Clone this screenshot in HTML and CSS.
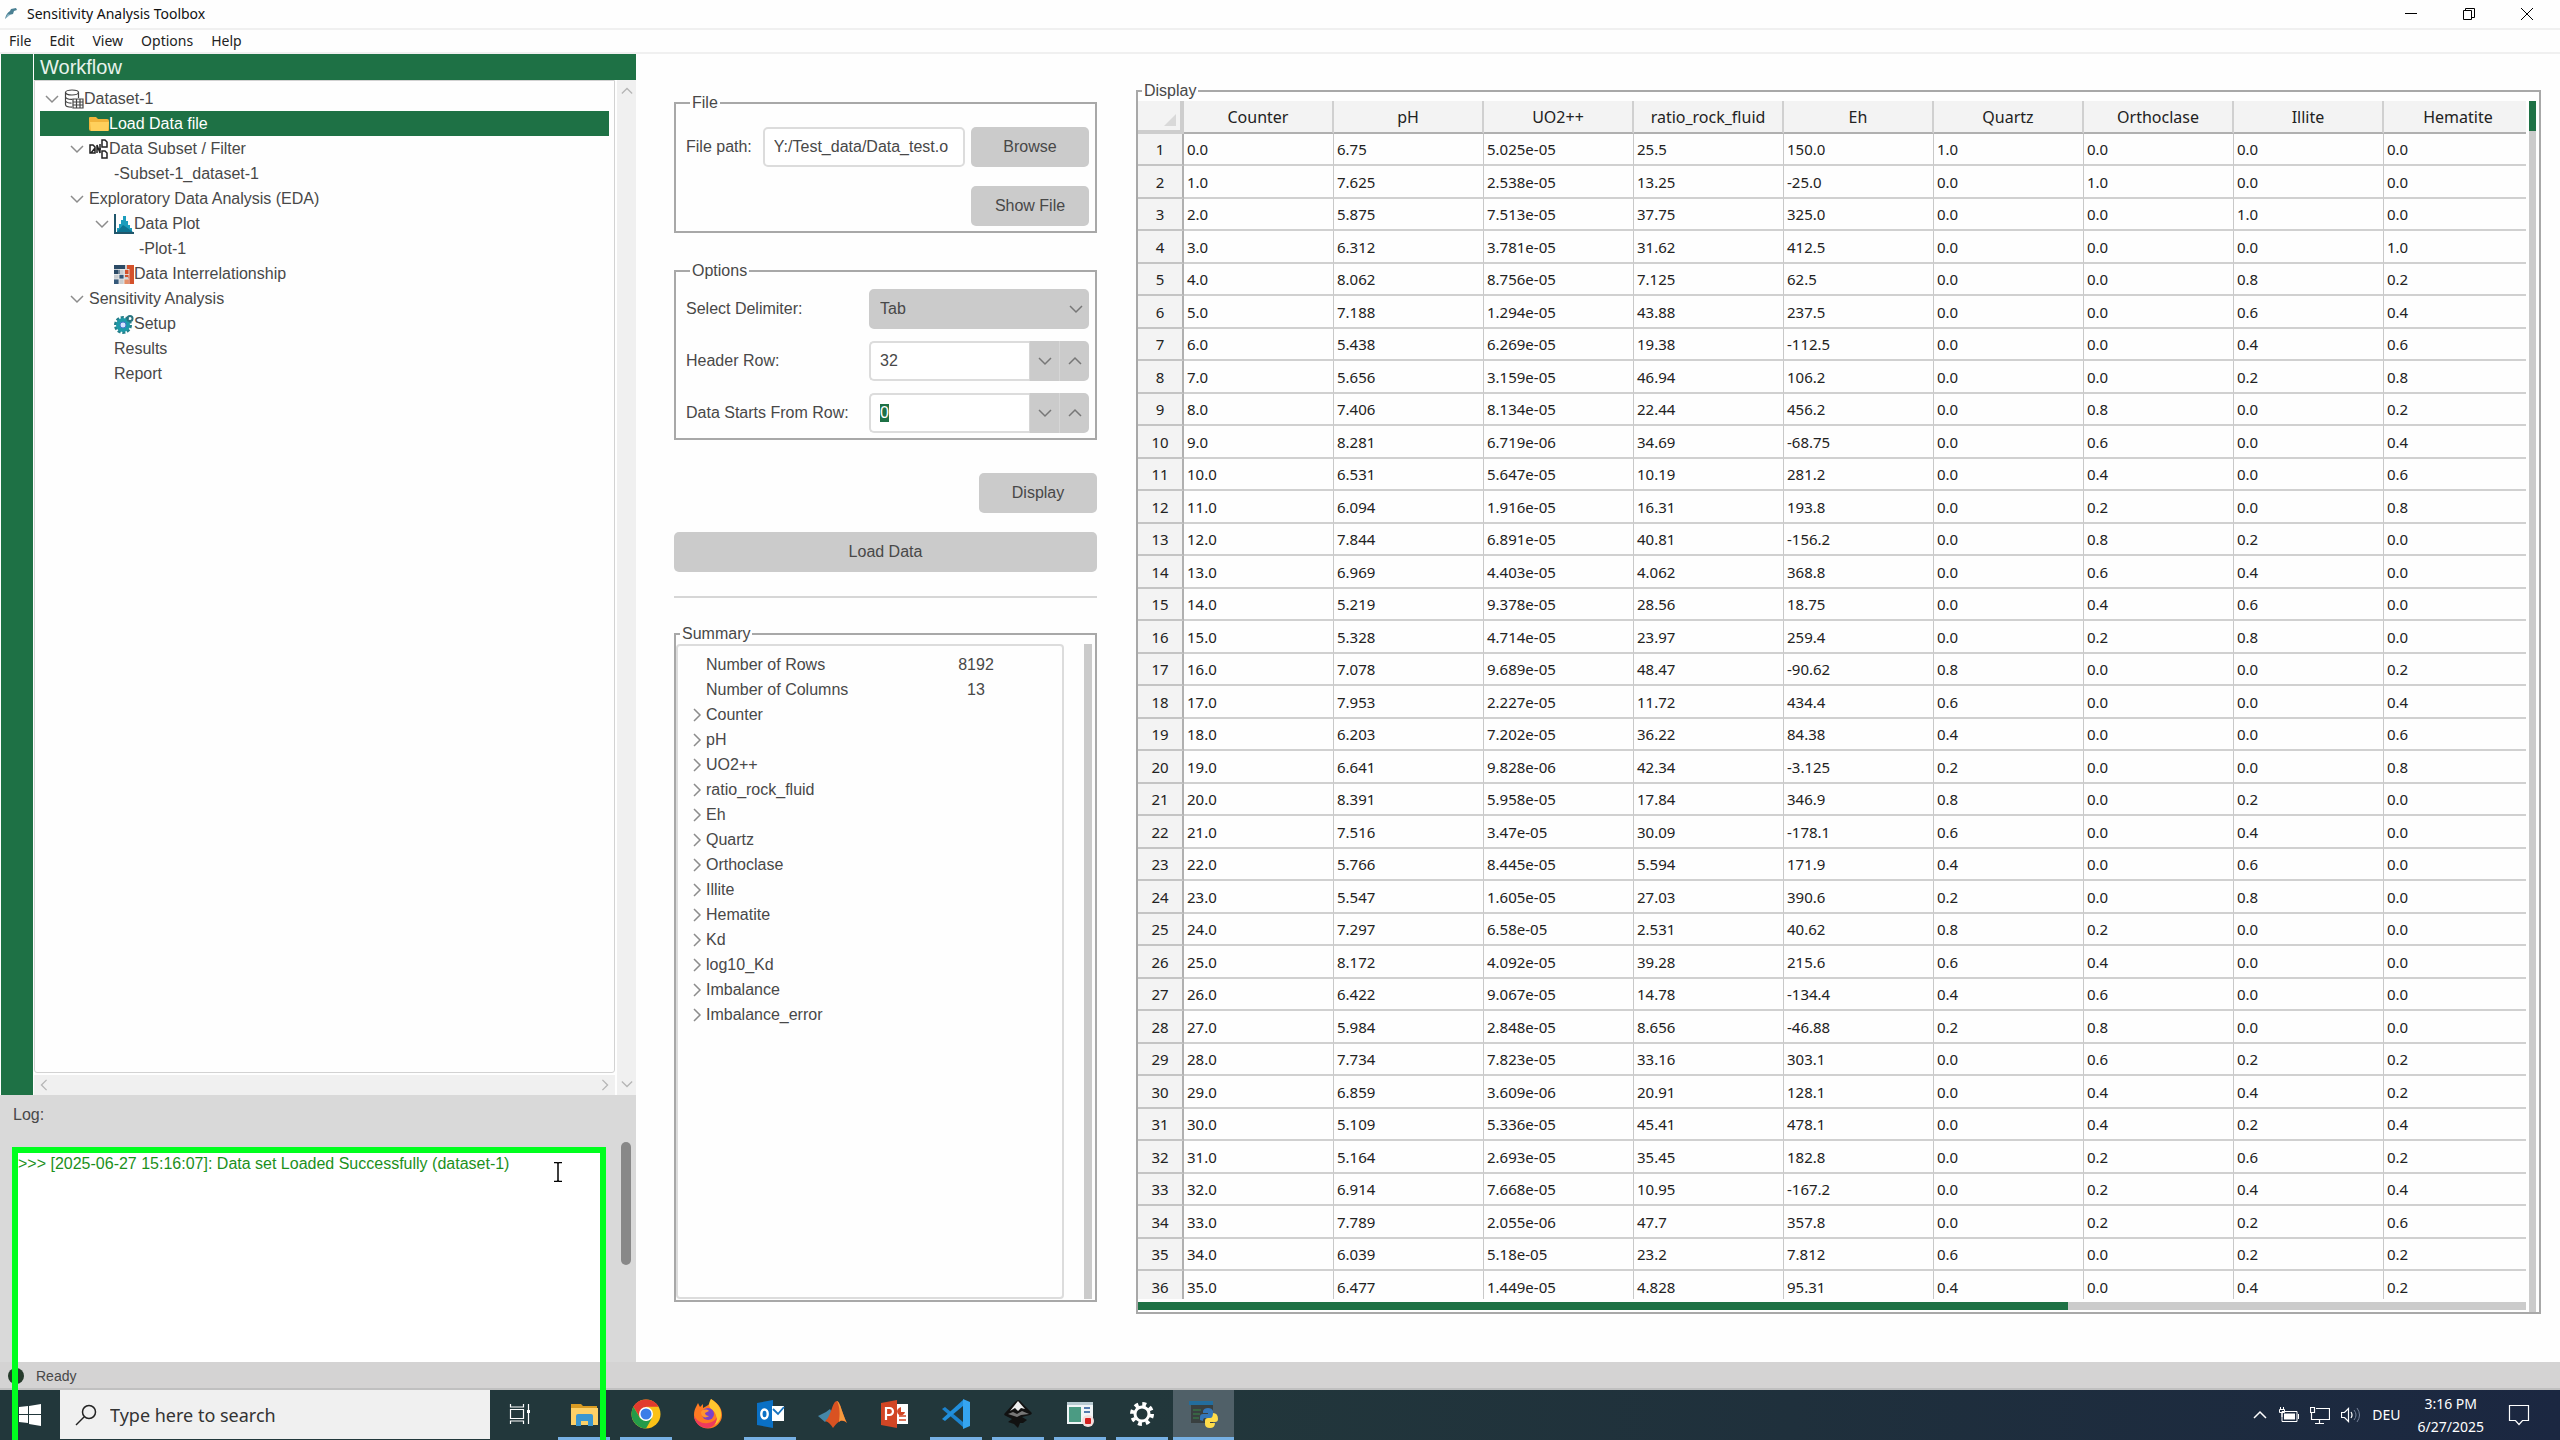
FILE: index.html
```html
<!doctype html>
<html lang="en">

<head>
  <meta charset="utf-8">
  <title>Sensitivity Analysis Toolbox</title>
  <link rel="stylesheet" href="styles.css">
</head>

<body>

  <!-- shared arrow shapes -->
  <svg class="defs" aria-hidden="true">
    <symbol id="down" viewBox="0 0 14 14"><path d="M1 4l6 6 6-6" fill="none" stroke="currentColor" stroke-width="1.5"/></symbol>
    <symbol id="up" viewBox="0 0 14 14"><path d="M1 10l6-6 6 6" fill="none" stroke="currentColor" stroke-width="1.5"/></symbol>
    <symbol id="right" viewBox="0 0 14 14"><path d="M4 1l6 6-6 6" fill="none" stroke="currentColor" stroke-width="1.5"/></symbol>
    <symbol id="left" viewBox="0 0 14 14"><path d="M10 1L4 7l6 6" fill="none" stroke="currentColor" stroke-width="1.5"/></symbol>
  </svg>

  <header class="titlebar">
    <svg class="app-icon" width="14" height="14" viewBox="0 0 14 14"><path d="M1 12c1-4 2-6 5-8l1-2 5-1 1 2-3 1-1 3-4 1z" fill="#4b8093"/><path d="M1 12l3-5 2 1z" fill="#8fb9c9"/></svg>
    <h1>Sensitivity Analysis Toolbox</h1>
    <div class="window-buttons">
      <button aria-label="Minimize"><svg width="14" height="14" viewBox="0 0 14 14"><path d="M1 6.500h12" stroke="#000"/></svg></button>
      <button aria-label="Restore"><svg width="14" height="14" viewBox="0 0 14 14"><path d="M1.500 3.500h8v9h-8zM3.500 3.500v-2h9v9h-3" fill="none" stroke="#000"/></svg></button>
      <button aria-label="Close"><svg width="14" height="14" viewBox="0 0 14 14"><path d="M1 1l12 12M13 1L1 13" stroke="#000"/></svg></button>
    </div>
  </header>

  <nav class="menubar">
    <a href="#">File</a>
    <a href="#">Edit</a>
    <a href="#">View</a>
    <a href="#">Options</a>
    <a href="#">Help</a>
  </nav>

  <main>
    <aside class="sidebar">
      <section class="workflow">
        <h2>Workflow</h2>
        <div class="tree-area">
          <ul class="tree">
            <li class="level-0"><svg class="arrow"><use href="#down"/></svg><svg class="icon" viewBox="0 0 20 20"><g fill="none" stroke="#444" stroke-width="1.200"><ellipse cx="8" cy="3.500" rx="6.500" ry="2.500"/><path d="M1.500 3.500v12c0 1.500 3 2.700 6.500 2.700M14.500 3.500V9M1.500 8c1 2 4 2.500 7 2.300M1.500 12c1 1.700 3.500 2.200 6 2.200"/><path d="M9 10h10v9H9zM9 13h10M9 16h10M12.500 10v9M16 10v9"/></g></svg>Dataset-1</li>
            <li class="level-1 selected"><span class="arrow"></span><svg class="icon" viewBox="0 0 20 20"><path d="M0 4q0-1 1-1h6l2 2h9q2 0 2 2v9q0 1-1 1H2q-2 0-2-2z" fill="#f2b43a"/><path d="M1 8h19l-1 9H2z" fill="#ffd05c"/></svg>Load Data file</li>
            <li class="level-1"><svg class="arrow"><use href="#down"/></svg><svg class="icon" viewBox="0 0 20 20"><g fill="none" stroke="#222" stroke-width="1.500"><path d="M1 6h3l2 2v6H1zM2 14l4-5M8 14V6l3 8V5M8 10h4"/><path d="M13 1h3l2 2v5h-5zM13 12h3l2 2v5h-5z"/></g></svg>Data Subset / Filter</li>
            <li class="level-2"><span class="arrow"></span>-Subset-1_dataset-1</li>
            <li class="level-1"><svg class="arrow"><use href="#down"/></svg>Exploratory Data Analysis (EDA)</li>
            <li class="level-2"><svg class="arrow"><use href="#down"/></svg><svg class="icon" viewBox="0 0 20 20"><path d="M1 0v19h19" fill="none" stroke="#20566b" stroke-width="2"/><path d="M3 18v-4h2v-4h2V6h2V2h3v5h2v4h2v3h2v4z" fill="#1b9dbd"/><path d="M3 18l6-7 3 2 7 5z" fill="#0d7492"/></svg>Data Plot</li>
            <li class="level-3"><span class="arrow"></span>-Plot-1</li>
            <li class="level-2"><span class="arrow"></span><svg class="icon" viewBox="0 0 20 20"><path d="M0 1h20v19H0z" fill="#c9cdd0"/><path d="M0 1h11v4H6v5H0z" fill="#2c4b66"/><path d="M13 1h7v19h-6v-7h-3V5h2z" fill="#d4512b"/><path d="M5 10h5v5H5zM0 15h5v5H0z" fill="#36597a"/><path d="M10 15h4v5h-4z" fill="#e58e67"/><path d="M5 5v15M10 5v15M15 5v15M0 5.500h15M0 10.500h15M0 15h15" stroke="#eee" stroke-width=".8"/></svg>Data Interrelationship</li>
            <li class="level-1"><svg class="arrow"><use href="#down"/></svg>Sensitivity Analysis</li>
            <li class="level-2"><span class="arrow"></span><svg class="icon" viewBox="0 0 20 20"><circle cx="9" cy="11" r="7.500" fill="none" stroke="#237f8b" stroke-width="3" stroke-dasharray="3 1.700"/><circle cx="9" cy="11" r="7" fill="#1e9aa8"/><circle cx="9" cy="11" r="3" fill="#d8e4ff" stroke="#4773c9"/><circle cx="16" cy="4.500" r="2.500" fill="none" stroke="#27737f" stroke-width="2"/></svg>Setup</li>
            <li class="level-2"><span class="arrow"></span>Results</li>
            <li class="level-2"><span class="arrow"></span>Report</li>
          </ul>
          <div class="hscroll"><svg><use href="#left"/></svg><svg><use href="#right"/></svg></div>
          <div class="vscroll"><svg><use href="#up"/></svg><svg><use href="#down"/></svg></div>
        </div>
      </section>
      <section class="log">
        <h3>Log:</h3>
        <div class="log-row">
          <p class="log-text">&gt;&gt;&gt; [2025-06-27 15:16:07]: Data set Loaded Successfully (dataset-1)</p>
          <div class="log-thumb"></div>
        </div>
      </section>
    </aside>

    <section class="settings">
      <fieldset class="file">
        <legend>File</legend>
        <label for="path">File path:</label>
        <input id="path" type="text" value="Y:/Test_data/Data_test.o">
        <button class="button">Browse</button>
        <button class="button show-file">Show File</button>
      </fieldset>

      <fieldset class="options">
        <legend>Options</legend>
        <label for="delimiter">Select Delimiter:</label>
        <div class="select">
          <select id="delimiter"><option>Tab</option></select>
          <svg><use href="#down"/></svg>
        </div>
        <label for="header-row">Header Row:</label>
        <div class="spin">
          <input id="header-row" type="text" value="32">
          <button aria-label="Decrease header row"><svg><use href="#down"/></svg></button>
          <button aria-label="Increase header row"><svg><use href="#up"/></svg></button>
        </div>
        <label for="data-row">Data Starts From Row:</label>
        <div class="spin">
          <input id="data-row" type="text" value="0">
          <button aria-label="Decrease data row"><svg><use href="#down"/></svg></button>
          <button aria-label="Increase data row"><svg><use href="#up"/></svg></button>
        </div>
      </fieldset>

      <button class="button display">Display</button>
      <button class="button load">Load Data</button>
      <hr>

      <fieldset class="summary">
        <legend>Summary</legend>
        <ul class="summary-tree" id="summary">
          <li><span class="arrow"></span>Number of Rows<b>8192</b></li>
          <li><span class="arrow"></span>Number of Columns<b>13</b></li>
        </ul>
        <div class="summary-scroll"></div>
      </fieldset>
    </section>

    <fieldset class="data">
      <legend>Display</legend>
      <div class="table-box">
        <table>
          <thead>
            <tr id="head"><th class="corner"><svg width="12" height="12" viewBox="0 0 12 12"><path d="M12 0v12H0z" fill="#d9d9d9"/></svg></th></tr>
          </thead>
          <tbody id="rows"></tbody>
        </table>
      </div>
      <div class="data-vscroll"><div></div></div>
      <div class="data-hscroll"><div></div></div>
    </fieldset>
  </main>

  <footer class="statusbar"><svg width="16" height="16" viewBox="0 0 16 16"><circle cx="8" cy="8" r="8" fill="#263a2b"/></svg>Ready</footer>

  <div class="taskbar">
    <button class="start" aria-label="Start"><svg width="22" height="22" viewBox="0 0 22 22"><path d="M0 3l9-1v8H0zM10 2l12-2v10H10zM0 11h9v8l-9-1zM10 11h12v11l-12-2z" fill="#fff"/></svg></button>
    <label class="search">
      <svg width="22" height="22" viewBox="0 0 22 22"><g fill="none" stroke="#222" stroke-width="1.500"><circle cx="14" cy="8" r="6.500"/><path d="M9 13l-8 8"/></g></svg>
      <input type="text" placeholder="Type here to search" aria-label="Type here to search">
    </label>
    <div class="apps">
      <button aria-label="Task View"><svg width="24" height="24" viewBox="0 0 24 24"><g fill="none" stroke="#fff" stroke-width="1.200"><path d="M2.500 7.500h13v9h-13zM2.500 2v3h13V2M2.500 22v-3h13v3M20.500 2v20"/></g><path d="M19 8h3v3h-3z" fill="#fff"/></svg></button>
      <button class="open" aria-label="File Explorer"><svg viewBox="0 0 30 30"><path d="M2 5h10l2 2h14v5H2z" fill="#d99b23"/><path d="M2 9h27v17H2z" fill="#fdd067"/><path d="M7 17q0-2 2-2h13q2 0 2 2v10h-5v-5h-7v5H7z" fill="#3a96d0"/></svg></button>
      <button class="open" aria-label="Chrome"><svg viewBox="0 0 30 30"><circle cx="15" cy="15" r="14.500" fill="#fbc116"/><path d="M2.400 7.800A14.500 14.500 0 0 1 27.600 7.800H15l-6 11z" fill="#e23b2e"/><path d="M2.400 7.800A14.500 14.500 0 0 0 15 29.500l6-10.500-6 3-6-3z" fill="#249b49"/><circle cx="15" cy="15" r="7" fill="#fff"/><circle cx="15" cy="15" r="5.500" fill="#3a7de8"/></svg></button>
      <button aria-label="Firefox"><svg viewBox="0 0 30 30"><path d="M3 8l2-4 2 4 3-3v4c4-2 7-3 8-9 6 4 11 8 11 16a14 13.500 0 0 1-28 0c0-4 1-6 2-8z" fill="#ff7a22"/><path d="M18 0c6 4 11 9 10 17-1 5-4 8-7 9 4-6 3-12-3-16-3-3-2-7 0-10z" fill="#ffc52e"/><path d="M1 17c3 5 8 8 14 7s8-4 9-6c0 5-3 11-10 11S2 24 1 17z" fill="#f03a5d"/><circle cx="15" cy="15" r="6" fill="#7a43c9"/><path d="M8 13c2-3 6-3 8-1l-4 2c0 2 2 3 4 3-4 3-8 1-8-4z" fill="#ff9430"/></svg></button>
      <button class="open" aria-label="Outlook"><svg viewBox="0 0 30 30"><path d="M2 4l16-3v28L2 26z" fill="#0a70c5"/><path d="M17 7h12v15H17z" fill="#fff"/><path d="M18 10l5 5 6-7" fill="none" stroke="#1771bd" stroke-width="1.800"/><ellipse cx="9.500" cy="15" rx="3.200" ry="4.500" fill="none" stroke="#fff" stroke-width="2.400"/></svg></button>
      <button aria-label="MATLAB"><svg viewBox="0 0 30 30"><path d="M1 17l8-4 4-3 3 5-8 8z" fill="#4587a8"/><path d="M8 22c6-3 7-20 12-20 3 0 6 15 10 22-5-4-8-3-14 5-2-3-4-6-8-7z" fill="#d95222"/><path d="M20 2c3 0 6 15 10 22-3-3-6-3-8-1 1-8 1-15-2-21z" fill="#f49a3e"/></svg></button>
      <button aria-label="PowerPoint"><svg viewBox="0 0 30 30"><path d="M2 4l16-3v28L2 26z" fill="#d24625"/><path d="M18 5h11v20H18z" fill="#fff"/><path d="M20 17h7M20 21h7" stroke="#d24625" stroke-width="1.500"/><path d="M20 9a4 4 0 1 0 6 4h-4V8z" fill="#d24625"/><path d="M7 21V9h3.500a3.500 3.500 0 0 1 0 7H8" fill="none" stroke="#fff" stroke-width="2.200"/></svg></button>
      <button class="open" aria-label="Visual Studio Code"><svg viewBox="0 0 30 30"><path d="M1 10l3-2 18 15v5z" fill="#1c82cd"/><path d="M1 20l3 2L22 7V1z" fill="#218fdd"/><path d="M22 0l7 3v24l-7 3z" fill="#35a5f1"/></svg></button>
      <button class="open" aria-label="Inkscape"><svg viewBox="0 0 30 30"><path d="M15 1q2 0 4 3l9 9q2 2-1 3l-8 2 5 3-4 3h-3l-2 5-4-4-6-2 4-3-6-3q-3-1-1-3l10-11z" fill="#111"/><path d="M15 2l7 8-4-1-3 3-3-3-5 3z" fill="#eee"/><path d="M5 15l5-2 4 2 5-3 7 3-8 1-4 2z" fill="#777"/></svg></button>
      <button class="open" aria-label="Screen recorder"><svg viewBox="0 0 30 30"><path d="M2 4h26v21H2z" fill="#f1f5f7"/><path d="M2 3h26v3H2z" fill="#b9cbd2"/><path d="M4 8h12v15H4z" fill="#4b9b83"/><path d="M19 9h6M19 13h6" stroke="#547caf" stroke-width="2"/><circle cx="23" cy="22" r="6" fill="#f2dede"/><rect x="20" y="19" width="6" height="6" rx="1" fill="#d31f1f"/></svg></button>
      <button class="open" aria-label="Settings"><svg viewBox="0 0 30 30"><circle cx="15" cy="15" r="7" fill="none" stroke="#fff" stroke-width="3"/><circle cx="15" cy="15" r="10" fill="none" stroke="#fff" stroke-width="4" stroke-dasharray="3.900 3.954"/></svg></button>
      <button class="open active" aria-label="Python"><svg viewBox="0 0 30 30"><path d="M0 2h24v4H0z" fill="#236d9d"/><path d="M2 6h22v18H2z" fill="#394040"/><path d="M4 11h8M4 15h7M4 19h6" stroke="#397044" stroke-width="1.500"/><path d="M11 21v-3q0-3 3-3h5v-1h-5v-2q1-3 5-3t5 3v5q0 2-2 2h-6q-2 0-2 3z" fill="#3476b8"/><path d="M24 14q5 0 5 6 0 3-3 3h-5v1h5q0 5-5 5t-5-4v-3q0-3 3-3h2q3 0 3-5z" fill="#ffdc4a"/></svg></button>
    </div>
    <div class="tray">
      <svg width="16" height="14"><use href="#up"/></svg>
      <svg width="20" height="16" viewBox="0 0 20 16"><path d="M3 4.500h15v10H3zM19.500 7v5" fill="none" stroke="#fff"/><path d="M5 6.500h11v6H5z" fill="#fff"/><path d="M1.500 0v3M4.500 0v3M.5 2.500h5v3h-5zM3 6v4" fill="none" stroke="#fff"/></svg>
      <svg width="20" height="18" viewBox="0 0 20 18"><path d="M6 2.500h13.500v11H1.500V7M5 17.500h9M9.500 14v3M.5 1.500h4v5h-4z" fill="none" stroke="#fff" stroke-width="1.200"/></svg>
      <svg width="20" height="16" viewBox="0 0 20 16"><path d="M.5 5.500h3l4-4v13l-4-4h-3zM10 5q2 3 0 6" fill="none" stroke="#fff" stroke-width="1.200"/><path d="M13 3q4 5 0 10M16 1q5 7 0 14" fill="none" stroke="#76829a"/></svg>
      <span>DEU</span>
      <time>3:16 PM<br>6/27/2025</time>
      <svg width="22" height="22" viewBox="0 0 22 22"><path d="M1.500 1.500h19v15h-6l-3.500 4-3.500-4h-6z" fill="none" stroke="#fff" stroke-width="1.200"/></svg>
    </div>
  </div>

  <!-- highlight over the log, runs off the bottom of the screen -->
  <div class="highlight"></div>
  <svg class="cursor" width="10" height="20" viewBox="0 0 10 20"><path d="M1 .5h3l1 1 1-1h3M1 19.500h3l1-1 1 1h3M5 1v18" fill="none" stroke="#000" stroke-width="1.500"/></svg>

  <script src="script.js"></script>
</body>

</html>
```

FILE: styles.css
```css
* {
  box-sizing: border-box;
}
body {
  margin: 0;
  height: 100vh;
  display: flex;
  flex-direction: column;
  position: relative;
  overflow: hidden;
  background: #fefefe;
  color: #484848;
  font: 16px/18px "Liberation Sans", Arial, sans-serif;
}
h1, h2, h3, p, ul {
  margin: 0;
  padding: 0;
  font-weight: normal;
}
ul {
  list-style: none;
}
button {
  border: 0;
  padding: 0;
  font: inherit;
  color: inherit;
  background: none;
}
svg {
  flex: none;
}
.defs {
  position: absolute;
  width: 0;
  height: 0;
}

/* title and menu */
.titlebar {
  height: 30px;
  display: flex;
  align-items: center;
  padding: 0 4px;
  border-bottom: 2px solid #f0f0f0;
  font-family: "Noto Sans", sans-serif;
}
.titlebar h1 {
  flex: 1;
  padding-left: 9px;
  font-size: 14px;
  color: #111;
}
.window-buttons {
  display: flex;
}
.window-buttons button {
  width: 58px;
  height: 28px;
}
.window-buttons svg {
  display: block;
  margin: auto;
}
.menubar {
  height: 24px;
  display: flex;
  align-items: center;
  gap: 18px;
  padding-left: 9px;
  border-bottom: 2px solid #f0f0f0;
  font: 14px/20px "Noto Sans", sans-serif;
}
.menubar a {
  color: #222;
  text-decoration: none;
}

main {
  flex: 1;
  min-height: 0;
  display: flex;
}

/* left side */
.sidebar {
  width: 636px;
  display: flex;
  flex-direction: column;
}
.workflow {
  flex: 1;
  min-height: 0;
  display: flex;
  flex-direction: column;
  margin-left: 1px;
  padding-left: 1px;
  border-left: 32px solid #1e7145;
}
.workflow h2 {
  padding: 1px 6px;
  background: #1e7145;
  color: #e8f3ec;
  font-size: 20px;
  line-height: 24px;
}
.tree-area {
  flex: 1;
  display: grid;
  grid-template-columns: 1fr 21px;
  grid-template-rows: 1fr 22px;
}
.tree {
  padding: 5px;
  border: 1px solid #d2d2d2;
  border-radius: 0 0 3px 3px;
}
.tree li {
  display: flex;
  align-items: center;
  height: 25px;
}
.tree .level-1 {
  padding-left: 25px;
}
.tree .level-2 {
  padding-left: 50px;
}
.tree .level-3 {
  padding-left: 75px;
}
.tree .selected {
  background: #1e7145;
  color: #fff;
}
.arrow {
  width: 24px;
  height: 14px;
  padding: 0 5px;
  color: #8c8c8c;
}
.icon {
  width: 20px;
  height: 20px;
}
.vscroll, .hscroll {
  display: flex;
  justify-content: space-between;
  align-items: center;
  background: #f0f0f0;
  color: #b5b5b5;
}
.vscroll svg, .hscroll svg {
  width: 12px;
  height: 12px;
}
.hscroll {
  grid-row: 2;
  margin-top: 2px;
  padding: 0 4px;
}
.vscroll {
  grid-area: 1 / 2 / 3 / 3;
  flex-direction: column;
  margin-left: 2px;
  padding: 5px 0;
}

.log {
  height: 267px;
  display: flex;
  flex-direction: column;
  background: #d9d9d9;
}
.log h3 {
  padding: 11px 13px 18px;
  font-size: 16px;
}
.log-row {
  flex: 1;
  display: flex;
}
.log-text {
  flex: 1;
  margin: 7px 15px 0;
  padding: 6px 3px;
  background: #fff;
  color: #1c901c;
}
.log-thumb {
  width: 10px;
  height: 123px;
  margin-right: 5px;
  border-radius: 5px;
  background: #888;
}

/* middle */
.settings {
  width: 423px;
  margin: 40px 39px 60px 38px;
  display: flex;
  flex-direction: column;
}
fieldset {
  min-width: 0;
  margin: 0;
  padding: 0;
  border: 2px solid #a8a8a8;
}
legend {
  margin-left: 4px;
  padding: 0 2px;
}
.button {
  height: 40px;
  border-radius: 5px;
  background: #cbcbcb;
}
input, select {
  min-width: 0;
  height: 40px;
  padding: 0 9px;
  border: 2px solid #dcdcdc;
  border-radius: 5px;
  outline: 0;
  background: #fff;
  color: inherit;
  font: inherit;
}
.file, .options {
  display: grid;
  align-items: center;
  padding: 15px 6px 5px 10px;
}
.file {
  grid-template-columns: auto 1fr 118px;
  gap: 19px 6px;
}
.file label {
  padding-right: 5px;
}
.show-file {
  grid-column: 3;
}
.options {
  grid-template-columns: 1fr 220px;
  gap: 12px;
  margin-top: 29px;
  padding-top: 9px;
}
.select {
  display: flex;
  align-items: center;
  position: relative;
}
.select select {
  flex: 1;
  appearance: none;
  border-color: #cbcbcb;
  background: #cbcbcb;
}
.select svg, .spin svg {
  display: block;
  width: 14px;
  height: 14px;
  margin: auto;
  color: #777;
}
/* arrow lies over the select box */
.select svg {
  position: absolute;
  right: 6px;
}
.spin {
  display: flex;
}
.spin input {
  flex: 1;
  border-right: 0;
  border-radius: 5px 0 0 5px;
}
.spin button {
  width: 30px;
  background: #cbcbcb;
  border-left: 1px solid #d6d6d6;
}
.spin button:last-child {
  border-radius: 0 5px 5px 0;
}
#data-row::selection {
  background: #1e7145;
  color: #fff;
}
.display {
  align-self: flex-end;
  width: 118px;
  margin-top: 33px;
}
.load {
  margin-top: 19px;
}
hr {
  width: 100%;
  margin: 24px 0 27px;
  border: 0;
  border-top: 2px solid #d6d6d6;
}
.summary {
  flex: 1;
  display: flex;
  justify-content: space-between;
  padding: 1px 3px 1px 0;
}
.summary-tree {
  width: 388px;
  padding: 6px 12px;
  border: 2px solid #dcdcdc;
  border-radius: 4px;
}
.summary-tree li {
  display: flex;
  align-items: center;
  height: 25px;
}
.summary-tree .arrow {
  width: 16px;
  padding: 0 2px 0 0;
}
.summary-tree b {
  width: 148px;
  margin-left: auto;
  text-align: center;
  font-weight: normal;
}
.summary-scroll {
  width: 8px;
  background: #cbcbcb;
}

/* data table */
.data {
  flex: 1;
  margin: 28px 19px 48px 0;
  display: grid;
  grid-template-columns: minmax(0, 1fr) 7px;
  grid-template-rows: minmax(0, 1fr) 10px;
  gap: 3px;
  padding: 1px 3px 0 0;
}
.table-box {
  overflow: hidden;
}
table {
  width: 1396px;
  table-layout: fixed;
  border-collapse: separate;
  border-spacing: 0;
  color: #222;
  font: 15px/18px "Noto Sans", sans-serif;
}
th {
  width: 150px;
  height: 33px;
  padding: 0;
  background: #f3f3f3;
  border-right: 2px solid #d0d0d0;
  border-bottom: 2px solid #b0b0b0;
  font-weight: normal;
}
thead th {
  font-size: 16px;
}
.corner {
  width: 46px;
  padding: 9px 4px 0 0;
  border-color: #cdcdcd;
  border-width: 0 4px 4px 0;
  border-style: solid;
  text-align: right;
}
.corner svg {
  display: block;
  margin-left: auto;
}
tbody th {
  height: 32px;
  border-right-color: #b0b0b0;
  border-bottom-color: #c4c4c4;
}
td {
  height: 32px;
  padding: 0 3px;
  border-right: 1px solid #c8c8c8;
  border-bottom: 2px solid #d0d0d0;
}
tr:nth-child(even) td, tbody tr:nth-child(even) th {
  height: 33px;
}
.data-vscroll, .data-hscroll {
  background: #cbcbcb;
}
.data-vscroll {
  grid-area: 1 / 2 / 3 / 3;
}
.data-vscroll div {
  height: 30px;
  background: #1e7145;
}
.data-hscroll {
  height: 8px;
}
.data-hscroll div {
  width: 67%;
  height: 8px;
  background: #1e7145;
}

/* bottom bars */
.statusbar {
  height: 28px;
  display: flex;
  align-items: center;
  gap: 12px;
  padding: 2px 8px 0;
  background: #d4d3d3;
  border-bottom: 2px solid #c0c0c0;
  font-size: 14px;
}
.taskbar {
  height: 50px;
  display: flex;
  background: linear-gradient(to right, #22373b 45%, #1f303c 70%, #1b2741);
  color: #fff;
  font-family: "Noto Sans", sans-serif;
}
.start {
  width: 60px;
}
.start svg {
  display: block;
  margin: auto;
}
.search {
  width: 430px;
  height: 49px;
  display: flex;
  align-items: center;
  gap: 4px;
  padding-left: 15px;
  background: #f0f0f0;
}
.search input {
  flex: 1;
  border: 0;
  background: none;
  font-size: 18px;
}
.search input::placeholder {
  color: #333;
  opacity: 1;
}
.apps {
  display: flex;
  flex: 1;
}
.apps button {
  width: 52px;
  margin-left: 10px;
  border-bottom: 3px solid transparent;
}
.apps button:first-child {
  margin-left: 2px;
  width: 56px;
}
.apps svg {
  display: block;
  margin: auto;
}
.apps svg[viewBox="0 0 30 30"] {
  width: 30px;
  height: 30px;
}
.apps .open {
  border-bottom-color: #76b0e4;
}
.apps .active {
  width: 61px;
  margin-left: 5px;
  background: #506068;
}
.tray {
  display: flex;
  align-items: center;
  gap: 11px;
  padding-right: 30px;
  font-size: 14px;
}
.tray time {
  margin: 0 13px 0 6px;
  line-height: 23px;
  text-align: center;
}

.highlight {
  position: absolute;
  left: 12px;
  bottom: -6px;
  width: 594px;
  height: 299px;
  border: 6px solid #00ff1e;
}
.cursor {
  position: absolute;
  left: 553px;
  bottom: 258px;
}
```

FILE: script.js
```javascript
var columns = ["Counter", "pH", "UO2++", "ratio_rock_fluid", "Eh", "Quartz", "Orthoclase", "Illite", "Hematite"];
var more = ["Kd", "log10_Kd", "Imbalance", "Imbalance_error"];

// one line for each row, the counter is added in the loop below
var data = [
  "6.75 5.025e-05 25.5 150.0 1.0 0.0 0.0 0.0",
  "7.625 2.538e-05 13.25 -25.0 0.0 1.0 0.0 0.0",
  "5.875 7.513e-05 37.75 325.0 0.0 0.0 1.0 0.0",
  "6.312 3.781e-05 31.62 412.5 0.0 0.0 0.0 1.0",
  "8.062 8.756e-05 7.125 62.5 0.0 0.0 0.8 0.2",
  "7.188 1.294e-05 43.88 237.5 0.0 0.0 0.6 0.4",
  "5.438 6.269e-05 19.38 -112.5 0.0 0.0 0.4 0.6",
  "5.656 3.159e-05 46.94 106.2 0.0 0.0 0.2 0.8",
  "7.406 8.134e-05 22.44 456.2 0.0 0.8 0.0 0.2",
  "8.281 6.719e-06 34.69 -68.75 0.0 0.6 0.0 0.4",
  "6.531 5.647e-05 10.19 281.2 0.0 0.4 0.0 0.6",
  "6.094 1.916e-05 16.31 193.8 0.0 0.2 0.0 0.8",
  "7.844 6.891e-05 40.81 -156.2 0.0 0.8 0.2 0.0",
  "6.969 4.403e-05 4.062 368.8 0.0 0.6 0.4 0.0",
  "5.219 9.378e-05 28.56 18.75 0.0 0.4 0.6 0.0",
  "5.328 4.714e-05 23.97 259.4 0.0 0.2 0.8 0.0",
  "7.078 9.689e-05 48.47 -90.62 0.8 0.0 0.0 0.2",
  "7.953 2.227e-05 11.72 434.4 0.6 0.0 0.0 0.4",
  "6.203 7.202e-05 36.22 84.38 0.4 0.0 0.0 0.6",
  "6.641 9.828e-06 42.34 -3.125 0.2 0.0 0.0 0.8",
  "8.391 5.958e-05 17.84 346.9 0.8 0.0 0.2 0.0",
  "7.516 3.47e-05 30.09 -178.1 0.6 0.0 0.4 0.0",
  "5.766 8.445e-05 5.594 171.9 0.4 0.0 0.6 0.0",
  "5.547 1.605e-05 27.03 390.6 0.2 0.0 0.8 0.0",
  "7.297 6.58e-05 2.531 40.62 0.8 0.2 0.0 0.0",
  "8.172 4.092e-05 39.28 215.6 0.6 0.4 0.0 0.0",
  "6.422 9.067e-05 14.78 -134.4 0.4 0.6 0.0 0.0",
  "5.984 2.848e-05 8.656 -46.88 0.2 0.8 0.0 0.0",
  "7.734 7.823e-05 33.16 303.1 0.0 0.6 0.2 0.2",
  "6.859 3.609e-06 20.91 128.1 0.0 0.4 0.4 0.2",
  "5.109 5.336e-05 45.41 478.1 0.0 0.4 0.2 0.4",
  "5.164 2.693e-05 35.45 182.8 0.0 0.2 0.6 0.2",
  "6.914 7.668e-05 10.95 -167.2 0.0 0.2 0.4 0.4",
  "7.789 2.055e-06 47.7 357.8 0.0 0.2 0.2 0.6",
  "6.039 5.18e-05 23.2 7.812 0.6 0.0 0.2 0.2",
  "6.477 1.449e-05 4.828 95.31 0.4 0.0 0.4 0.2"
];

var head = "";
for (var i = 0; i < columns.length; i++) {
  head += "<th>" + columns[i] + "</th>";
}
document.getElementById("head").innerHTML += head;

var rows = "";
for (var i = 0; i < data.length; i++) {
  rows += "<tr><th>" + (i + 1) + "</th><td>" + i + ".0</td><td>" + data[i].split(" ").join("</td><td>") + "</td></tr>";
}
document.getElementById("rows").innerHTML = rows;

// summary list has all columns, also those outside of the table view
var names = columns.concat(more);
var items = "";
for (var i = 0; i < names.length; i++) {
  items += "<li><svg class='arrow'><use href='#right'/></svg>" + names[i] + "</li>";
}
document.getElementById("summary").innerHTML += items;

// the row number is selected when the page opens
document.getElementById("data-row").select();
```
